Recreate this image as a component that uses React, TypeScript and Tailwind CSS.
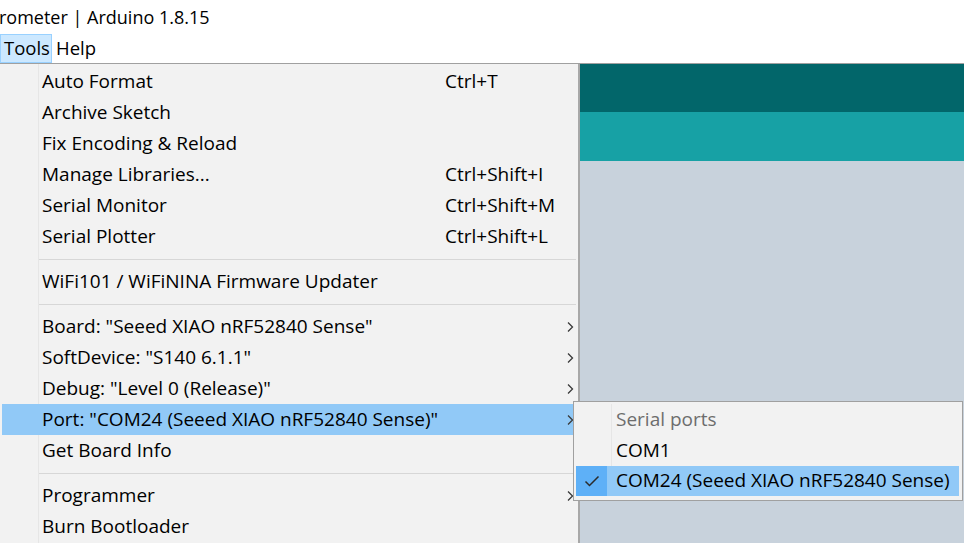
import React from "react";

type Item =
  | { kind: "item"; label: string; shortcut?: string; arrow?: boolean; active?: boolean }
  | { kind: "sep" };

const items: Item[] = [
  { kind: "item", label: "Auto Format", shortcut: "Ctrl+T" },
  { kind: "item", label: "Archive Sketch" },
  { kind: "item", label: "Fix Encoding & Reload" },
  { kind: "item", label: "Manage Libraries...", shortcut: "Ctrl+Shift+I" },
  { kind: "item", label: "Serial Monitor", shortcut: "Ctrl+Shift+M" },
  { kind: "item", label: "Serial Plotter", shortcut: "Ctrl+Shift+L" },
  { kind: "sep" },
  { kind: "item", label: "WiFi101 / WiFiNINA Firmware Updater" },
  { kind: "sep" },
  { kind: "item", label: 'Board: "Seeed XIAO nRF52840 Sense"', arrow: true },
  { kind: "item", label: 'SoftDevice: "S140 6.1.1"', arrow: true },
  { kind: "item", label: 'Debug: "Level 0 (Release)"', arrow: true },
  { kind: "item", label: 'Port: "COM24 (Seeed XIAO nRF52840 Sense)"', arrow: true, active: true },
  { kind: "item", label: "Get Board Info" },
  { kind: "sep" },
  { kind: "item", label: "Programmer", arrow: true },
  { kind: "item", label: "Burn Bootloader" },
];

function Chevron() {
  return (
    <svg width="8" height="12" viewBox="0 0 8 12" className="block">
      <path d="M2 1.5 L6.5 6 L2 10.5" fill="none" stroke="#3a3a3a" strokeWidth="1.3" />
    </svg>
  );
}

function Check() {
  return (
    <svg width="16" height="12" viewBox="0 0 16 12" className="block">
      <path d="M1.5 6.5 L5.5 10.5 L14.5 1.5" fill="none" stroke="#2b2b2b" strokeWidth="1.5" />
    </svg>
  );
}

export default function App() {
  return (
    <div
      className="w-[964px] h-[543px] overflow-hidden bg-white relative text-black flex flex-col"
      style={{ fontFamily: '"Open Sans", "Noto Sans", sans-serif' }}
    >
      {/* Title bar */}
      <div className="h-[34px] flex items-center text-[18px] leading-none">
        <span className="-ml-[1px] -mt-[1px]">rometer | Arduino 1.8.15</span>
      </div>
      {/* Menu bar */}
      <div className="h-[30px] flex items-start border-b border-[#a0a0a0] text-[18.5px] leading-none">
        <div className="h-[29px] w-[52px] bg-[#cce8ff] border border-[#99d1ff] flex items-center pl-[3px] pb-[1px]">
          Tools
        </div>
        <div className="h-[29px] flex items-center pl-[4px] pb-[1px]">Help</div>
      </div>
      {/* Body */}
      <div className="flex-1 flex min-h-0">
        {/* Dropdown menu */}
        <div className="w-[580px] shrink-0 bg-[#f2f2f2] border-r-2 border-[#a8a8a8] pl-[2px] pt-[2px] relative">
          <div className="absolute left-[38px] top-0 bottom-0 w-px bg-[#e6e6e6]" />
          {items.map((it, i) =>
            it.kind === "sep" ? (
              <div key={i} className="h-[14px] flex items-center pl-[36px] pr-[2px]">
                <div className="h-px w-full bg-[#d7d7d7]" />
              </div>
            ) : (
              <div
                key={i}
                className={
                  "h-[31px] flex items-center text-[19px] leading-none relative " +
                  (it.active ? "bg-[#91c9f7]" : "")
                }
              >
                <span className="pl-[40px] pb-[1px] whitespace-nowrap">{it.label}</span>
                {it.shortcut && (
                  <span className="absolute left-[443px] top-[6px] whitespace-nowrap">{it.shortcut}</span>
                )}
                {it.arrow && (
                  <span className="absolute left-[564px] top-[10px]">
                    <Chevron />
                  </span>
                )}
              </div>
            )
          )}
        </div>
        {/* Editor area */}
        <div className="flex-1 flex flex-col">
          <div className="h-[48px] bg-[#02666a]" />
          <div className="h-[49px] bg-[#17a1a5]" />
          <div className="flex-1 bg-[#c8d2dc]" />
        </div>
      </div>

      {/* Port submenu */}
      <div className="absolute left-[573px] top-[401px] w-[390px] bg-[#f2f2f2] border border-[#a0a0a0] pt-[2px] pb-[4px] px-[2px] text-[19px] leading-none">
        <div className="absolute left-[37px] top-[2px] h-[62px] w-px bg-[#e6e6e6]" />
        <div className="h-[31px] flex items-center pl-[40px] pb-[1px] text-[#6d6d6d]">Serial ports</div>
        <div className="h-[31px] flex items-center pl-[40px] pb-[1px]">COM1</div>
        <div className="h-[30px] flex items-center bg-[#91c9f7] mr-[1px]">
          <div className="w-[31px] h-full bg-[#5eb0f7] flex items-center justify-center">
            <Check />
          </div>
          <span className="pl-[9px] pb-[1px] whitespace-nowrap">COM24 (Seeed XIAO nRF52840 Sense)</span>
        </div>
      </div>
    </div>
  );
}
